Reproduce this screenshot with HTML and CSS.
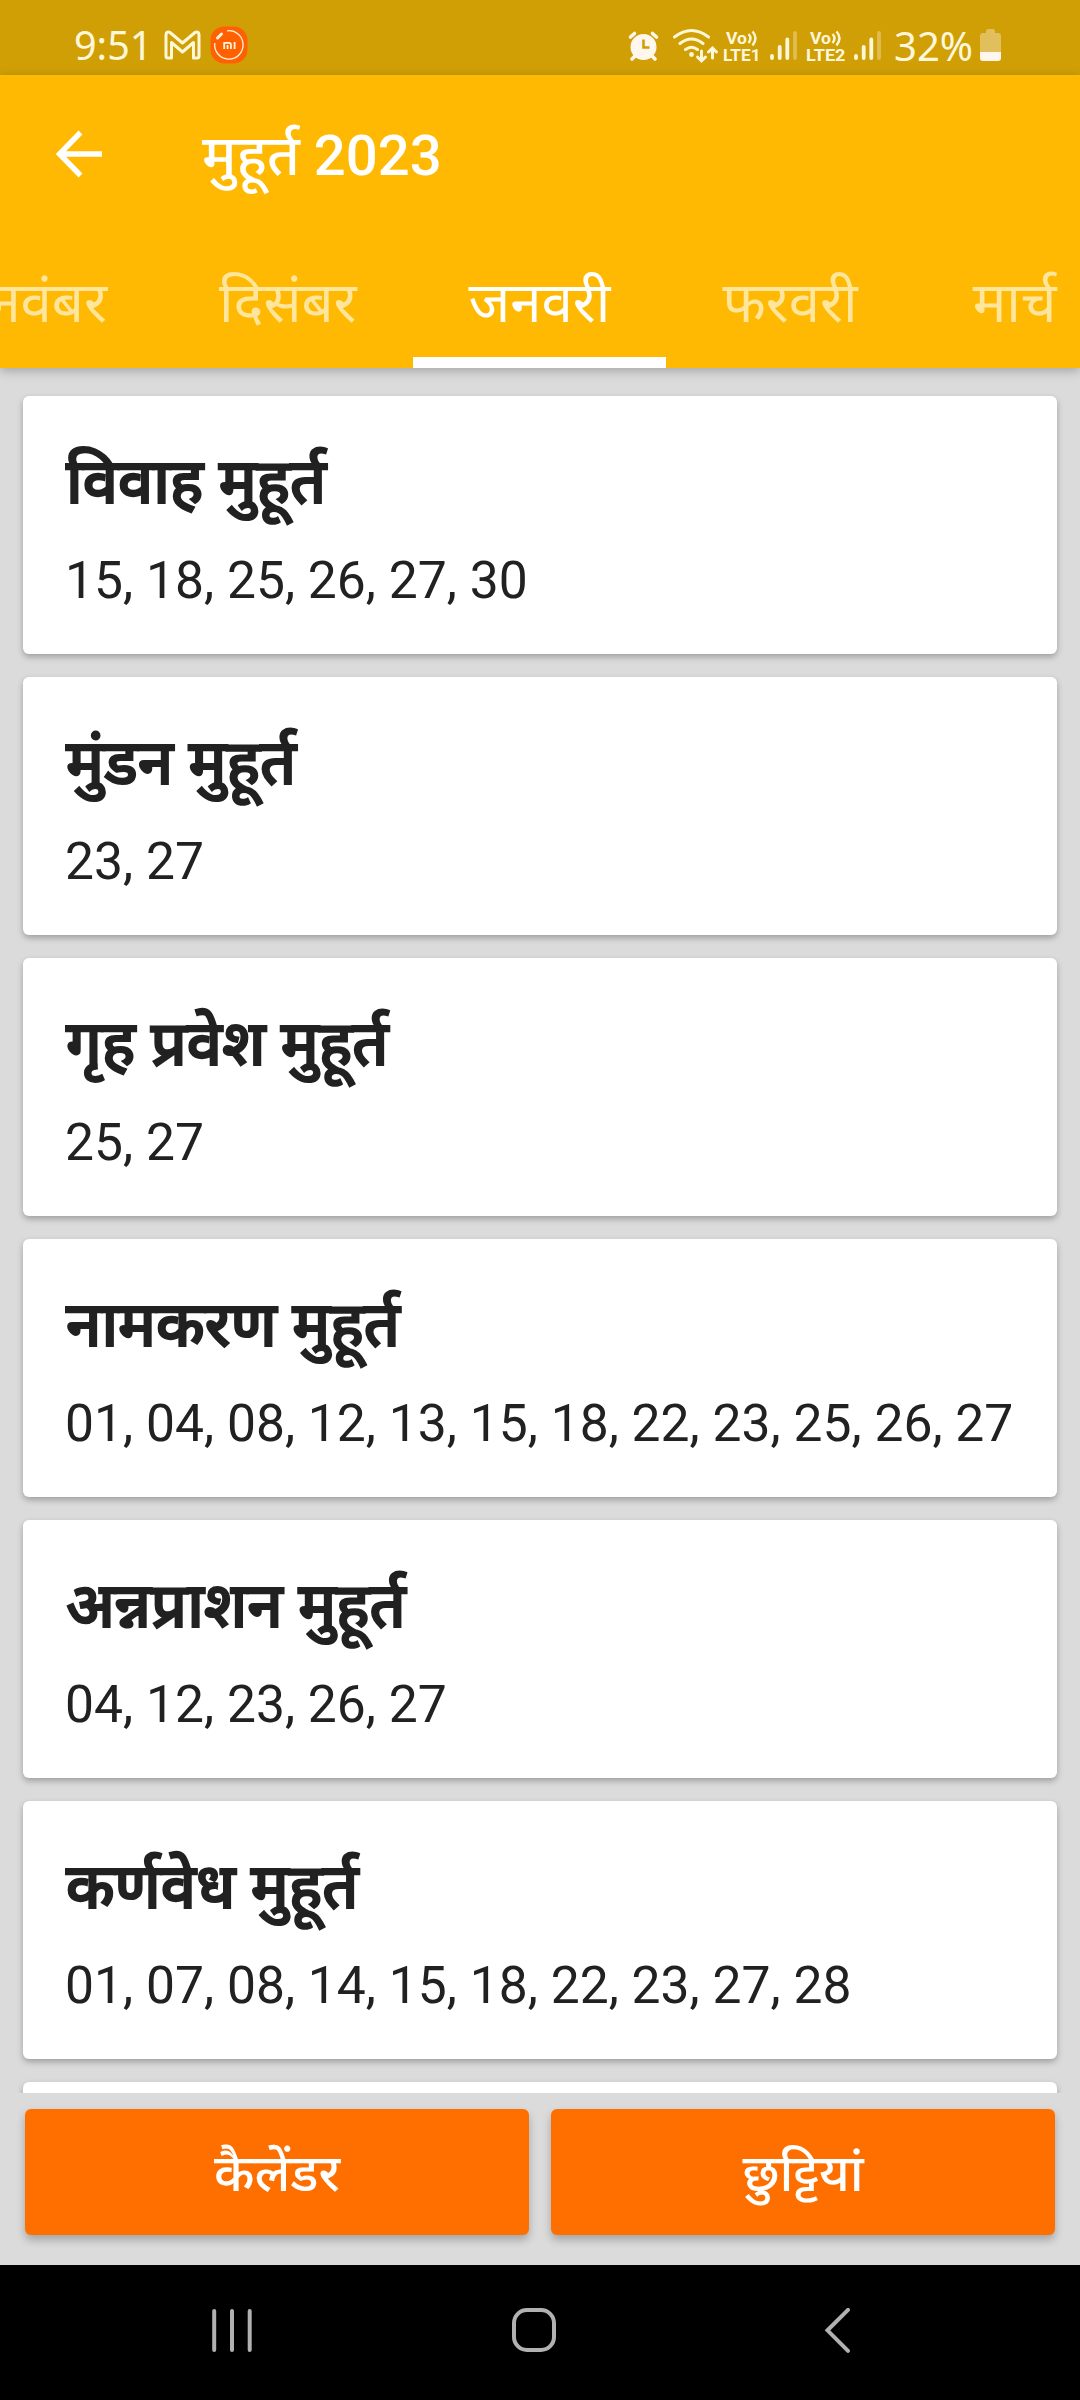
FILE: index.html
```html
<!DOCTYPE html>
<html lang="hi">
<head>
  <meta charset="UTF-8">
  <meta name="viewport" content="width=device-width, initial-scale=1.0">
  <title>मुहूर्त 2023</title>
  <link rel="stylesheet" href="styles.css">
</head>
<body>
  <div class="app">
    <div class="status-bar">
      <div class="status-left">
        <span class="time">9:51</span>
        <svg class="gmail" width="37" height="30" viewBox="0 0 37 30">
          <path d="M2 26V5Q2 1 6 2.500L18.500 13 31 2.500Q35 1 35 5V26Q35 28 33 28H29.500V12.500L18.500 22 7.500 12.500V28H4Q2 28 2 26Z" fill="none" stroke="#fff7da" stroke-width="3" stroke-linejoin="round"/>
        </svg>
        <svg class="mi" width="38" height="38" viewBox="0 0 38 38">
          <rect x="0.500" y="0.500" width="37" height="37" rx="14" fill="#ff6100"/>
          <path d="M17 4.800A14.200 14.200 0 1 1 4.800 17" fill="none" stroke="#fff3e0" stroke-width="1.300"/>
          <path d="M7.500 12L11.500 8" stroke="#fff3e0" stroke-width="3" stroke-linecap="round"/>
          <path d="M14.200 23V16.900H19Q20.900 16.900 20.900 18.800V23M17.600 19V23M24.600 16V23" fill="none" stroke="#fff3e0" stroke-width="1.800"/>
        </svg>
      </div>
      <div class="status-right">
        <svg class="status-icons" width="264" height="42" viewBox="624 24 264 42">
          <g fill="#fff7ee">
            <circle cx="643.500" cy="47" r="13"/>
            <path d="M635 56l-3 3M652 56l3 3M630.500 37l4-3.500M656.500 37l-4-3.500" stroke="#fff7ee" stroke-width="3.600" stroke-linecap="round"/>
            <path d="M643.500 39.500v8h6" fill="none" stroke="#d09f06" stroke-width="2.600"/>
          </g>
          <g fill="none" stroke="#fff7da" stroke-width="3" stroke-linecap="round">
            <path d="M674.500 37Q691.500 24 708.500 37M680 43.500Q691.500 34.500 703 43.500M685.500 49.500Q691.500 45 697.500 49.500"/>
            <path d="M701.500 51v9M697.500 57l4 4 4-4M712.500 58v-9M708.500 52l4-4 4 4"/>
          </g>
          <circle cx="691.500" cy="54.500" r="2.400" fill="#fff7da"/>
          <g fill="#fff7da" class="lte">
            <text x="726" y="43.500" textLength="21" lengthAdjust="spacingAndGlyphs">Vo</text>
            <text x="723" y="61" textLength="37.500" lengthAdjust="spacingAndGlyphs">LTE1</text>
            <text x="810" y="43.500" textLength="21" lengthAdjust="spacingAndGlyphs">Vo</text>
            <text x="806" y="61" textLength="39.500" lengthAdjust="spacingAndGlyphs">LTE2</text>
          </g>
          <path d="M748.500 34q4 4 0 9M752.500 31.500q6 6.500 0 14M832.500 34q4 4 0 9M836.500 31.500q6 6.500 0 14" fill="none" stroke="#fff7da" stroke-width="2.400"/>
          <g stroke="#fff7da" stroke-width="3.800" stroke-linecap="round">
            <path d="M772 56v2M779.700 47v11M787.300 39.500v18.500M856 56v2M863.700 47v11M871.300 39.500v18.500"/>
            <path d="M795 33v25M879 33v25" opacity="0.350"/>
          </g>
        </svg>
        <span class="percent">32%</span>
        <svg class="battery" width="21" height="32" viewBox="0 0 21 32">
          <path d="M6 4V2Q6 0 8 0H13Q15 0 15 2V4H18Q21 4 21 7V23H0V7Q0 4 3 4Z" fill="#e0bf5c"/>
          <path d="M0 23H21V29Q21 32 18 32H3Q0 32 0 29Z" fill="#fff7ee"/>
        </svg>
      </div>
    </div>

    <div class="header">
      <div class="toolbar">
        <svg class="back" width="46" height="48" viewBox="0 0 46 48">
          <path d="M46 24H4M24.500 2.500L3.500 24 24.500 45.500" fill="none" stroke="#fff" stroke-width="5.400"/>
        </svg>
        <h1>मुहूर्त 2023</h1>
      </div>
      <ul class="tabs">
        <li class="first">नवंबर</li>
        <li>दिसंबर</li>
        <li class="active">जनवरी</li>
        <li>फरवरी</li>
        <li class="last">मार्च</li>
      </ul>
    </div>

    <div class="card-list">
      <div class="card"><h2>विवाह मुहूर्त</h2><p>15, 18, 25, 26, 27, 30</p></div>
      <div class="card"><h2>मुंडन मुहूर्त</h2><p>23, 27</p></div>
      <div class="card"><h2>गृह प्रवेश मुहूर्त</h2><p>25, 27</p></div>
      <div class="card"><h2>नामकरण मुहूर्त</h2><p>01, 04, 08, 12, 13, 15, 18, 22, 23, 25, 26, 27</p></div>
      <div class="card"><h2>अन्नप्राशन मुहूर्त</h2><p>04, 12, 23, 26, 27</p></div>
      <div class="card"><h2>कर्णवेध मुहूर्त</h2><p>01, 07, 08, 14, 15, 18, 22, 23, 27, 28</p></div>
      <div class="card"></div>
    </div>

    <div class="buttons">
      <button>कैलेंडर</button>
      <button>छुट्टियां</button>
    </div>

    <div class="nav-bar">
      <svg class="recents" width="42" height="46" viewBox="0 0 42 46">
        <path d="M2.200 3V42M20 3V42M37.700 3V42" stroke="#b1b1b1" stroke-width="4" stroke-linecap="round"/>
      </svg>
      <svg class="home" width="46" height="46" viewBox="0 0 46 46">
        <rect x="2" y="2" width="40" height="40" rx="13" fill="none" stroke="#b1b1b1" stroke-width="4"/>
      </svg>
      <svg width="28" height="46" viewBox="0 0 28 46">
        <path d="M24 1.800L3.500 22.300 24 42.800" fill="none" stroke="#b1b1b1" stroke-width="4" stroke-linecap="round"/>
      </svg>
    </div>
  </div>
</body>
</html>
```
FILE: styles.css
```css
*{ padding: 0; margin: 0; box-sizing: border-box;}
li{ list-style-type: none;}
svg{ display: block; flex: none;}
body{ font-family: Roboto, "Noto Sans Devanagari", "Noto Sans", sans-serif; color: #212121;}
.app{ width: 1080px; height: 2400px; display: flex; flex-direction: column; overflow: hidden;
      background-color: #dbdbdb;
}

.status-bar{ height: 75px; padding: 0 79px 0 74px; display: flex; justify-content: space-between;
      background-color: #d09f06; color: #fff7da;
      font-family: "Noto Sans", sans-serif;
}
.status-left, .status-right{ display: flex; align-items: center; padding-top: 15px;}
.time{ font-size: 39.5px; width: 90px;}
.gmail{ margin-right: 9px;}
.percent{ font-size: 40px; width: 86px; margin-left: 6px;}
.lte{ font: 700 17px Roboto, sans-serif;}

.header{ height: 293px; position: relative; background-color: #ffb902; color: #fff;
      box-shadow: 0 3px 10px rgba(0,0,0,.25);
}
.toolbar{ height: 158px; padding-left: 56px; display: flex; align-items: center;}
.toolbar h1{ margin-left: 100px; padding-top: 13px; font-size: 56.25px; font-weight: 500;}
.tabs{ height: 135px; display: flex; overflow: hidden;}
.tabs li{ flex: none; height: 135px; padding: 0 56px; font-size: 56.25px; line-height: 140px; color: #ffe69c;}
.tabs .first{ width: 163px; padding-left: 0; display: flex; justify-content: flex-end;}
.tabs .last{ padding-left: 59px;}
.tabs .active{ color: #fff; border-bottom: 11px solid #fff;}

.card-list{ height: 1725px; padding: 28px 23px 0; overflow: hidden; flex: none;}
.card{ height: 258px; margin-bottom: 23px; padding: 46px 43px 0; border-radius: 6px;
      background-color: #fff; box-shadow: 0 3px 6px rgba(0,0,0,.28);
}
.card h2{ font-size: 61.875px; line-height: 80px; font-weight: 500; white-space: nowrap;
      -webkit-text-stroke: 2px #212121;
}
.card p{ margin: 29px 0 0 -1px; font-size: 51.6px; line-height: 60px; white-space: nowrap;}

.buttons{ height: 172px; padding: 16px 25px 0; display: flex; gap: 22px;}
.buttons button{ flex: 1; height: 126px; padding-top: 11px; border: 0; border-radius: 6px;
      background-color: #ff6f00; color: #fff; font: 500 51.6px Roboto, "Noto Sans Devanagari", sans-serif;
      box-shadow: 0 5px 8px rgba(0,0,0,.25);
}

.nav-bar{ height: 135px; padding: 0 0 3px 212px; display: flex; align-items: center;
      background-color: #000;
}
.recents{ margin-right: 258px;}
.home{ margin-right: 266px;}
```
